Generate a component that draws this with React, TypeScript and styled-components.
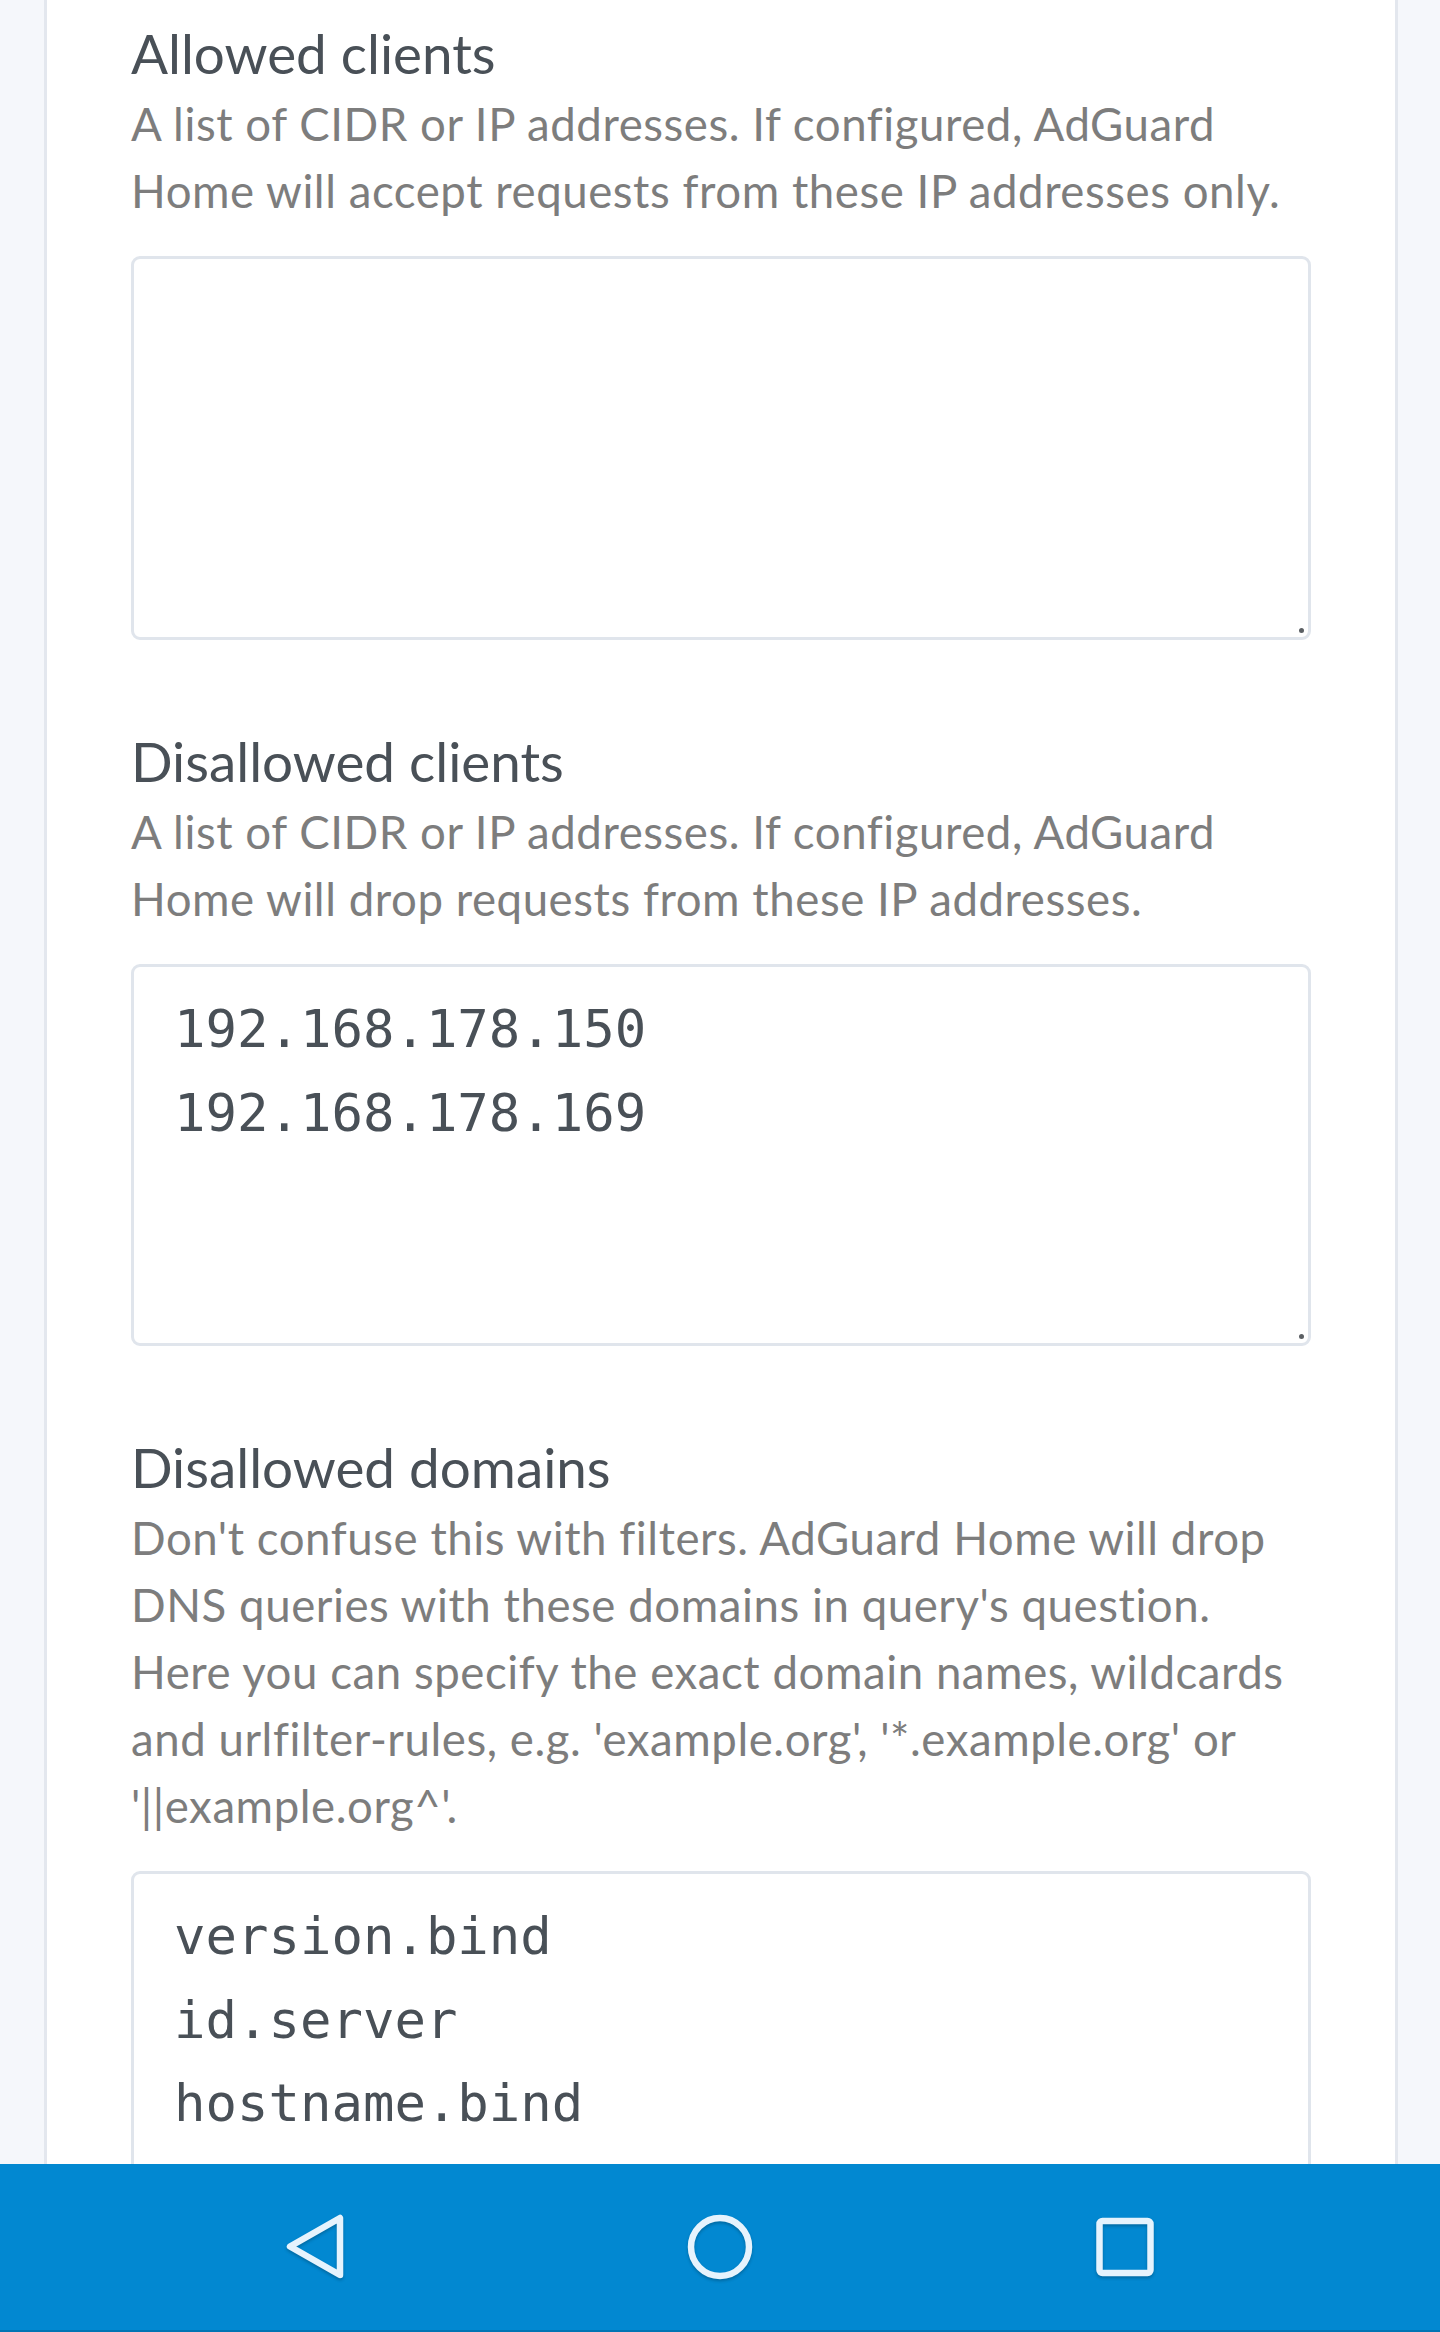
import React from 'react';
import styled, { createGlobalStyle } from 'styled-components';

const GlobalStyle = createGlobalStyle`
  html, body {
    margin: 0;
    padding: 0;
    background: #f5f7fb;
  }

  * {
    box-sizing: border-box;
  }
`;

const Screen = styled.div`
  height: 2332px;
  display: flex;
  flex-direction: column;
  overflow: hidden;
`;

const Viewport = styled.main`
  flex: 1;
  min-height: 0;
  overflow: hidden;
  padding: 0 42px 0 44px;
`;

const Card = styled.div`
  background: #fff;
  border-left: 3px solid #e3e7ee;
  border-right: 3px solid #e3e7ee;
  padding: 17px 84px 0 84px;
  min-height: 100%;
`;

const Section = styled.section`
  margin-bottom: 85px;
`;

const Title = styled.h3`
  margin: 0;
  font-family: Lato, 'Noto Sans', sans-serif;
  font-weight: 400;
  font-size: 54.8px;
  line-height: 73px;
  color: #495057;
`;

const Hint = styled.p`
  margin: 0;
  font-family: Lato, 'Noto Sans', sans-serif;
  font-size: 45.6px;
  letter-spacing: 0.55px;
  line-height: 67px;
  color: #7d7d7d;
`;

const FieldWrap = styled.div`
  position: relative;
  margin-top: 32px;

  &::after {
    content: '';
    position: absolute;
    right: 7px;
    bottom: 7px;
    width: 5px;
    height: 5px;
    border-radius: 50%;
    background: #5b5f63;
  }
`;

const Field = styled.textarea<{ $rows: number }>`
  display: block;
  width: 100%;
  height: ${(p) => p.$rows}px;
  margin: 0;
  padding: 20px 36px 18px 40px;
  border: 3px solid #e0e5ec;
  border-radius: 9px;
  background: #fff;
  resize: none;
  outline: none;
  overflow: hidden;
  font-family: 'DejaVu Sans Mono', 'Liberation Mono', monospace;
  font-size: 52.3px;
  line-height: 83.5px;
  color: #495057;
`;

const NavBar = styled.nav`
  flex: 0 0 168px;
  background: #0288d1;
  border-bottom: 2px solid #0275b4;
  display: flex;
  align-items: center;
  justify-content: center;
  gap: 325px;
`;

const NavButton = styled.button`
  width: 80px;
  height: 80px;
  padding: 0;
  border: 0;
  background: none;
  display: flex;
  align-items: center;
  justify-content: center;

  svg {
    display: block;
    filter: drop-shadow(0 2px 1.5px rgba(0, 0, 0, 0.22));
  }
`;

const ICON = '#e6f3fd';

const sections = [
  {
    title: 'Allowed clients',
    hint: 'A list of CIDR or IP addresses. If configured, AdGuard Home will accept requests from these IP addresses only.',
    value: '',
    height: 384,
  },
  {
    title: 'Disallowed clients',
    hint: 'A list of CIDR or IP addresses. If configured, AdGuard Home will drop requests from these IP addresses.',
    value: '192.168.178.150\n192.168.178.169',
    height: 382,
  },
  {
    title: 'Disallowed domains',
    hint: "Don't confuse this with filters. AdGuard Home will drop DNS queries with these domains in query's question. Here you can specify the exact domain names, wildcards and urlfilter-rules, e.g. 'example.org', '*.example.org' or '||example.org^'.",
    value: 'version.bind\nid.server\nhostname.bind',
    height: 384,
  },
];

export default function App() {
  return (
    <Screen>
      <GlobalStyle />
      <Viewport>
        <Card>
          {sections.map((s) => (
            <Section key={s.title}>
              <Title>{s.title}</Title>
              <Hint>{s.hint}</Hint>
              <FieldWrap>
                <Field $rows={s.height} defaultValue={s.value} spellCheck={false} />
              </FieldWrap>
            </Section>
          ))}
        </Card>
      </Viewport>
      <NavBar>
        <NavButton aria-label="Back">
          <svg width="80" height="80" viewBox="0 0 80 80">
            <polygon
              points="15,39.5 65,11 65,68"
              fill="none"
              stroke={ICON}
              strokeWidth="6.5"
              strokeLinejoin="round"
            />
          </svg>
        </NavButton>
        <NavButton aria-label="Home">
          <svg width="80" height="80" viewBox="0 0 80 80">
            <circle cx="40" cy="40" r="29" fill="none" stroke={ICON} strokeWidth="6.5" />
          </svg>
        </NavButton>
        <NavButton aria-label="Recents">
          <svg width="80" height="80" viewBox="0 0 80 80">
            <rect x="14.5" y="14" width="51" height="52" rx="3" fill="none" stroke={ICON} strokeWidth="6.5" />
          </svg>
        </NavButton>
      </NavBar>
    </Screen>
  );
}
